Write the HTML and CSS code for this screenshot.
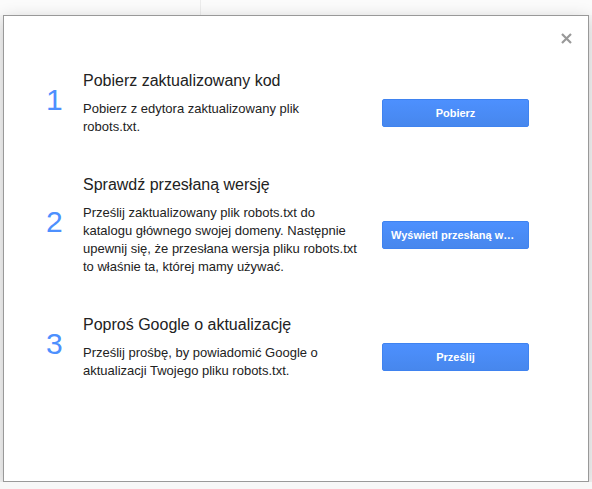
FILE: index.html
```html
<!DOCTYPE html>
<html lang="pl">
<head>
    <meta charset="UTF-8">
    <meta name="viewport" content="width=device-width, initial-scale=1.0">
    <title>Prześlij zaktualizowany plik robots.txt</title>
    <link rel="stylesheet" href="styles.css">
</head>
<body>
    <!-- Page behind the dialog -->
    <div class="backdrop">
        <div class="backdrop-col"></div>
    </div>

    <div class="dialog">
        <button class="close" title="Zamknij">
            <svg width="11" height="11" viewBox="0 0 11 11">
                <path d="M1 1 L10 10 M10 1 L1 10" stroke="#999" stroke-width="2.2" fill="none"/>
            </svg>
        </button>

        <div class="step">
            <div class="step-num">1</div>
            <div class="step-text">
                <h3>Pobierz zaktualizowany kod</h3>
                <p>Pobierz z edytora zaktualizowany plik<br>robots.txt.</p>
            </div>
            <div class="step-action">
                <button class="btn">Pobierz</button>
            </div>
        </div>

        <div class="step">
            <div class="step-num">2</div>
            <div class="step-text">
                <h3>Sprawdź przesłaną wersję</h3>
                <p>Prześlij zaktualizowany plik robots.txt do katalogu głównego swojej domeny. Następnie upewnij się, że przesłana wersja pliku robots.txt to właśnie ta, której mamy używać.</p>
            </div>
            <div class="step-action">
                <button class="btn">Wyświetl przesłaną wersję</button>
            </div>
        </div>

        <div class="step">
            <div class="step-num">3</div>
            <div class="step-text">
                <h3>Poproś Google o aktualizację</h3>
                <p>Prześlij prośbę, by powiadomić Google o aktualizacji Twojego pliku robots.txt.</p>
            </div>
            <div class="step-action">
                <button class="btn">Prześlij</button>
            </div>
        </div>
    </div>
</body>
</html>
```

FILE: styles.css
```css
/* Reset */
* {
    margin: 0;
    padding: 0;
    box-sizing: border-box;
}

body {
    font-family: "Liberation Sans", Arial, sans-serif;
    background: #f7f7f7;
    color: #222;
    padding-left: 3px;
}

/* Faint page behind the dialog */
.backdrop {
    height: 15px;
    margin-left: -3px;
    background: #fbfbfb;
}

.backdrop-col {
    width: 201px;
    height: 15px;
    border-right: 1px solid #ececec;
}

/* Dialog box */
.dialog {
    position: relative;
    width: 586px;
    height: 467px;
    background: #fff;
    border: 1px solid #999;
    box-shadow: 0 4px 16px rgba(0, 0, 0, 0.2);
    padding-top: 55px;
}

.close {
    position: absolute;
    top: 17px;
    right: 16px;
    border: none;
    background: none;
    cursor: pointer;
    line-height: 0;
}

/* Steps */
.step {
    display: flex;
    align-items: center;
    margin-bottom: 39px;
}

.step-num {
    width: 79px;
    padding-left: 42px;
    margin-bottom: 8px;
    font-size: 30px;
    line-height: 30px;
    color: #4d90fe;
}

.step-text {
    width: 281px;
}

.step-text h3 {
    font-size: 16px;
    font-weight: normal;
    line-height: 20px;
    margin-bottom: 9px;
}

.step-text p {
    font-size: 13px;
    line-height: 18px;
}

.step-action {
    margin-left: 18px;
    margin-top: 18px;
}

.btn {
    display: block;
    width: 147px;
    height: 28px;
    padding: 0 8px;
    font-family: "Liberation Sans", Arial, sans-serif;
    font-size: 11px;
    font-weight: bold;
    color: #fff;
    background: linear-gradient(#4d90fe, #4787ed);
    border: 1px solid #3f83f0;
    border-radius: 2px;
    white-space: nowrap;
    overflow: hidden;
    text-overflow: ellipsis;
    cursor: pointer;
}
```
